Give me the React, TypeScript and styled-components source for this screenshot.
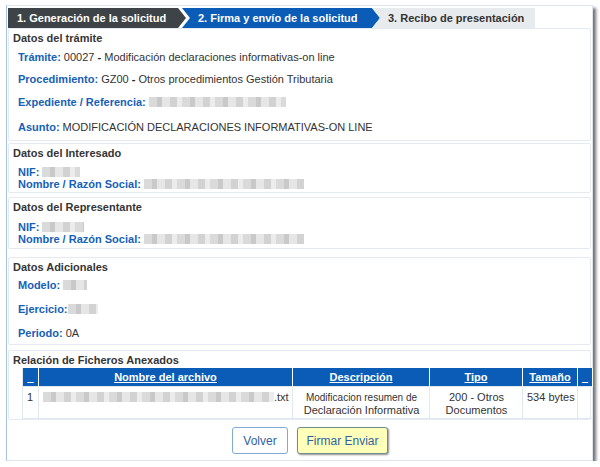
import styled, { createGlobalStyle } from "styled-components";

const Global = createGlobalStyle`
  html, body { margin: 0; padding: 0; background: #fff; }
  body { font-family: "Liberation Sans", Arial, sans-serif; font-size: 11px; color: #333; }
`;

const Panel = styled.div`
  box-sizing: border-box;
  margin: 5px 0 0 6px;
  width: 587px;
  height: 456px;
  border: 1px solid #dfe5ec;
  border-left-color: #a8c2e2;
  box-shadow: 3px 3px 3px rgba(0, 0, 0, 0.55);
  padding: 2px 1px 0 1px;
  display: flex;
  flex-direction: column;
  background: #fff;
`;

const Steps = styled.div`
  display: flex;
  height: 20px;
  flex: none;
`;

type Tone = "done" | "active" | "next";

const toneBg: Record<Tone, string> = { done: "#3e4348", active: "#0b5cb6", next: "#e8ebee" };

const Step = styled.div<{ $tone: Tone; $w: number; $shift: number; $pad: number; $notch?: boolean; $tip?: boolean }>`
  width: ${(p) => p.$w}px;
  margin-left: ${(p) => p.$shift}px;
  padding-left: ${(p) => p.$pad}px;
  flex: none;
  box-sizing: border-box;
  display: flex;
  align-items: center;
  white-space: nowrap;
  font-weight: bold;
  font-size: 11px;
  color: ${(p) => (p.$tone === "next" ? "#333" : "#fff")};
  background: ${(p) => toneBg[p.$tone]};
  clip-path: polygon(
    0 0,
    ${(p) => (p.$tip ? "calc(100% - 8px) 0, 100% 50%, calc(100% - 8px) 100%" : "100% 0, 100% 100%")},
    0 100%
    ${(p) => (p.$notch ? ", 8px 50%" : "")}
  );
`;

const Box = styled.div<{ $pb: number; $mt: number }>`
  flex: none;
  border: 1px solid #e4eaf1;
  border-radius: 2px;
  margin-top: ${(p) => p.$mt}px;
  padding-bottom: ${(p) => p.$pb}px;
`;

const Title = styled.div`
  font-weight: bold;
  font-size: 11px;
  color: #353535;
  padding: 2px 0 0 4px;
  height: 15px;
  line-height: 15px;
`;

const Row = styled.div<{ $h: number; $mt?: number }>`
  padding-left: 9px;
  margin-top: ${(p) => p.$mt ?? 0}px;
  height: ${(p) => p.$h}px;
  line-height: ${(p) => p.$h}px;
  white-space: nowrap;
  font-size: 11px;
`;

const Label = styled.span`
  color: #1560b8;
  font-weight: bold;
`;

const Dash = styled.b`
  color: #222;
`;

const Blur = styled.span<{ $w: number }>`
  display: inline-block;
  vertical-align: -1px;
  width: ${(p) => p.$w}px;
  height: 10px;
  background: repeating-linear-gradient(
    90deg,
    #dadada 0 8px,
    #c9c9c9 8px 13px,
    #e6e6e6 13px 21px,
    #d2d2d2 21px 28px,
    #ececec 28px 33px
  );
  filter: blur(0.7px);
`;

const Table = styled.table`
  border-collapse: collapse;
  margin-left: 13px;
  width: 570px;
  table-layout: fixed;
  font-size: 11px;
`;

const Col = styled.col<{ $w: number }>`
  width: ${(p) => p.$w}px;
`;

const Th = styled.th`
  background: #0b5cb6;
  color: #fff;
  height: 18px;
  padding: 0;
  border-left: 1px solid #fff;
  border-right: 1px solid #fff;
  font-weight: bold;
  text-decoration: underline;
  font-size: 11px;
  &:first-child { border-left-color: #e2e8ef; }
`;

const Td = styled.td<{ $align?: string }>`
  border: 1px solid #e2e8ef;
  vertical-align: top;
  text-align: ${(p) => p.$align ?? "left"};
  padding: 4px 3px 0 4px;
  height: 27px;
  line-height: 13px;
  white-space: nowrap;
  overflow: hidden;
  color: #333;
`;

const Small = styled.span`
  font-size: 10px;
`;

const Buttons = styled.div`
  display: flex;
  justify-content: center;
  gap: 9px;
  margin-top: 7px;
  padding-left: 21px;
`;

const Button = styled.button<{ $primary?: boolean }>`
  height: 27px;
  padding: 0;
  width: ${(p) => (p.$primary ? 91 : 56)}px;
  font-family: inherit;
  font-size: 12px;
  color: #2f64a0;
  background: ${(p) => (p.$primary ? "#ffffba" : "#fff")};
  border: 1px solid ${(p) => (p.$primary ? "#6f8f8f" : "#7fa9d9")};
  border-radius: 3px;
  box-shadow: ${(p) => (p.$primary ? "1px 1px 2px rgba(0,0,0,0.45)" : "none")};
`;

const columns = [16, 254, 137, 93, 55, 15];

export default function App() {
  return (
    <>
      <Global />
      <Panel>
        <Steps>
          <Step $tone="done" $w={178} $shift={0} $pad={9} $tip>1. Generación de la solicitud</Step>
          <Step $tone="active" $w={198} $shift={-4} $pad={16} $notch $tip>2. Firma y envío de la solicitud</Step>
          <Step $tone="next" $w={163} $shift={-8} $pad={16} $notch>3. Recibo de presentación</Step>
        </Steps>

        <Box $mt={0} $pb={0}>
          <Title>Datos del trámite</Title>
          <Row $h={22}>
            <Label>Trámite:</Label> 00027 <Dash>-</Dash> Modificación declaraciones informativas-on line
          </Row>
          <Row $h={23}>
            <Label>Procedimiento:</Label> GZ00 <Dash>-</Dash> Otros procedimientos Gestión Tributaria
          </Row>
          <Row $h={23}>
            <Label>Expediente / Referencia:</Label> <Blur $w={137} />
          </Row>
          <Row $h={26}>
            <Label>Asunto:</Label> MODIFICACIÓN DECLARACIONES INFORMATIVAS-ON LINE
          </Row>
        </Box>

        <Box $mt={2} $pb={2}>
          <Title>Datos del Interesado</Title>
          <Row $h={12} $mt={5}>
            <Label>NIF:</Label> <Blur $w={38} />
          </Row>
          <Row $h={12}>
            <Label>Nombre / Razón Social:</Label> <Blur $w={160} />
          </Row>
        </Box>

        <Box $mt={4} $pb={3}>
          <Title>Datos del Representante</Title>
          <Row $h={12} $mt={6}>
            <Label>NIF:</Label> <Blur $w={42} />
          </Row>
          <Row $h={12}>
            <Label>Nombre / Razón Social:</Label> <Blur $w={160} />
          </Row>
        </Box>

        <Box $mt={8} $pb={1}>
          <Title>Datos Adicionales</Title>
          <Row $h={20}>
            <Label>Modelo:</Label> <Blur $w={24} />
          </Row>
          <Row $h={28}>
            <Label>Ejercicio:</Label><Blur $w={30} />
          </Row>
          <Row $h={20}>
            <Label>Periodo:</Label> 0A
          </Row>
        </Box>

        <Box $mt={5} $pb={0}>
          <Title>Relación de Ficheros Anexados</Title>
          <Table>
            <colgroup>
              {columns.map((w, i) => (
                <Col key={i} $w={w} />
              ))}
            </colgroup>
            <thead>
              <tr>
                <Th>_</Th>
                <Th>Nombre del archivo</Th>
                <Th>Descripción</Th>
                <Th>Tipo</Th>
                <Th>Tamaño</Th>
                <Th>_</Th>
              </tr>
            </thead>
            <tbody>
              <tr>
                <Td>1</Td>
                <Td>
                  <Blur $w={231} />.txt
                </Td>
                <Td $align="center">
                  <Small>Modificacion resumen de</Small>
                  <br />
                  Declaración Informativa
                </Td>
                <Td $align="center">
                  200 - Otros
                  <br />
                  Documentos
                </Td>
                <Td>534 bytes</Td>
                <Td />
              </tr>
            </tbody>
          </Table>
        </Box>

        <Buttons>
          <Button>Volver</Button>
          <Button $primary>Firmar Enviar</Button>
        </Buttons>
      </Panel>
    </>
  );
}
